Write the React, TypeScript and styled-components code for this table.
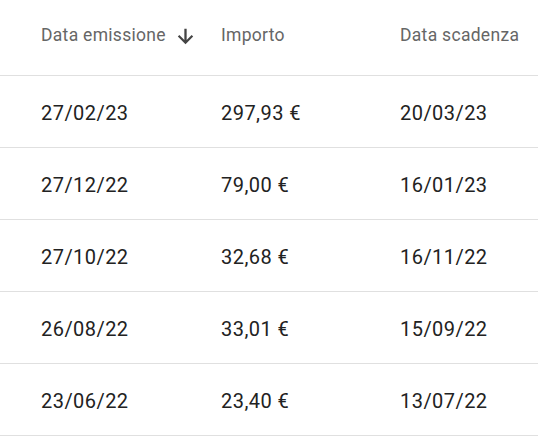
import React from "react";
import styled, { createGlobalStyle } from "styled-components";

const Global = createGlobalStyle`
  html, body { margin: 0; padding: 0; background: #ffffff; }
  body { font-family: Roboto, "Liberation Sans", Arial, sans-serif; overflow: hidden; }
`;

const Table = styled.div`
  width: 538px;
  display: flex;
  flex-direction: column;
`;

const HeaderRow = styled.div`
  display: grid;
  grid-template-columns: 180px 179px 1fr;
  padding-left: 41px;
  border-bottom: 1px solid #e0e0e0;
  align-items: center;
  padding-bottom: 6px;
  box-sizing: border-box;
  height: 76px;
`;

const HeadCell = styled.div`
  display: flex;
  align-items: center;
  gap: 8px;
  font-size: 17.5px;
  line-height: 24px;
  letter-spacing: 0.3px;
  color: #666666;
  white-space: nowrap;
`;

const SortIcon = styled.svg`
  width: 23px;
  height: 23px;
  fill: #444444;
  margin-top: 3px;
`;

const Row = styled.div`
  display: grid;
  grid-template-columns: 180px 179px 1fr;
  padding-left: 41px;
  height: 72px;
  box-sizing: border-box;
  border-bottom: 1px solid #e0e0e0;
  align-items: center;
`;

const Cell = styled.div`
  font-size: 20px;
  line-height: 28px;
  letter-spacing: 0.45px;
  color: #222222;
  white-space: nowrap;
  padding-top: 2px;
`;

const rows = [
  ["27/02/23", "297,93 €", "20/03/23"],
  ["27/12/22", "79,00 €", "16/01/23"],
  ["27/10/22", "32,68 €", "16/11/22"],
  ["26/08/22", "33,01 €", "15/09/22"],
  ["23/06/22", "23,40 €", "13/07/22"],
];

export default function App() {
  return (
    <>
      <Global />
      <Table>
        <HeaderRow>
          <HeadCell>
            Data emissione
            <SortIcon viewBox="0 0 24 24">
              <path d="M20 12l-1.6-1.6L13.2 15.6V4h-2.4v11.6L5.6 10.4 4 12l8 8 8-8z" />
            </SortIcon>
          </HeadCell>
          <HeadCell>Importo</HeadCell>
          <HeadCell>Data scadenza</HeadCell>
        </HeaderRow>
        {rows.map((r) => (
          <Row key={r[0]}>
            <Cell>{r[0]}</Cell>
            <Cell>{r[1]}</Cell>
            <Cell>{r[2]}</Cell>
          </Row>
        ))}
      </Table>
    </>
  );
}
